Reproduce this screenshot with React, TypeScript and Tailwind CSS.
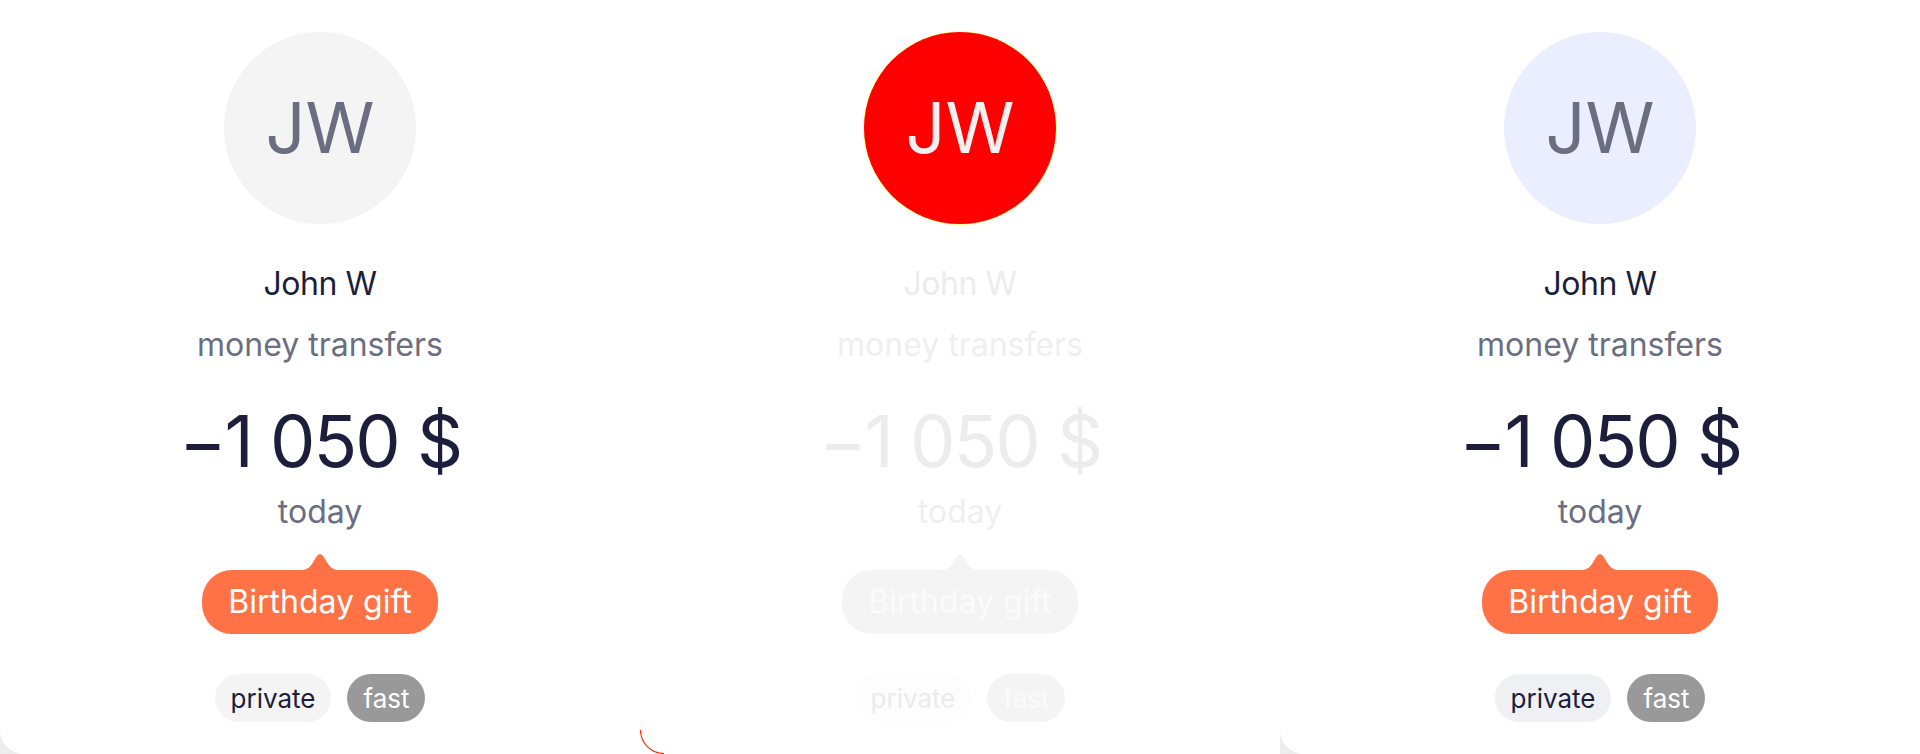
import React from "react";

type Variant = "gray" | "faded" | "blue";

function Tail({ color }: { color: string }) {
  return (
    <svg
      className="absolute left-1/2 -translate-x-1/2 top-[-18px]"
      width="66"
      height="20"
      viewBox="0 0 66 20"
    >
      <path
        d="M0 20 C 15 19, 21 18, 25 12 L 29.5 4.5 Q 33 -0.5 36.5 4.5 L 41 12 C 45 18, 51 19, 66 20 Z"
        fill={color}
      />
    </svg>
  );
}

function Card({ variant }: { variant: Variant }) {
  const faded = variant === "faded";
  const avatarCls =
    variant === "gray"
      ? "bg-[#f4f4f4] text-[#6b6d80]"
      : variant === "blue"
      ? "bg-[#ebeefe] text-[#6b6d80]"
      : "bg-[#ff0000] text-[#f0f0f0] shadow-[0_0_0_1px_rgba(255,255,0,0.35)]";
  const dark = faded ? "text-[#ececec]" : "text-[#1c1e3b]";
  const muted = faded ? "text-[#efefef]" : "text-[#6b6d80]";
  const bubbleBg = faded ? "#f4f4f4" : "#ff7246";
  const privateBg = variant === "gray" ? "bg-[#f4f4f4]" : variant === "blue" ? "bg-[#eff0f3]" : "bg-[#fdfdfd]";
  const privateText = faded ? "text-[#ebebeb]" : "text-[#1c1e3b]";
  const fastBg = faded ? "bg-[#f4f4f4]" : "bg-[#999999]";
  const fastText = faded ? "text-[#fbfbfb]" : "text-white";

  return (
    <div className="relative w-[640px] h-[754px] bg-white rounded-bl-[24px] flex flex-col items-center pt-[32px]">
      <div
        className={`w-[192px] h-[192px] rounded-full flex items-center justify-center text-[70px] leading-none ${avatarCls}`}
      >
        JW
      </div>
      <div className={`mt-[40px] text-[32px] leading-[40px] tracking-[-0.5px] ${dark}`}>John W</div>
      <div className={`mt-[21px] text-[32px] leading-[40px] ${muted}`}>money transfers</div>
      <div className={`mt-[36px] text-[72px] leading-[80px] tracking-[-2px] ${dark}`}>
        −1 050 $
      </div>
      <div className={`mt-[11px] text-[32px] leading-[40px] ${muted}`}>today</div>
      <div
        className={`relative mt-[38px] h-[64px] rounded-[30px] px-[26px] flex items-center text-[32px] leading-[40px] ${
          faded ? "text-[#fbfbfb]" : "text-white"
        }`}
        style={{ backgroundColor: bubbleBg }}
      >
        <Tail color={bubbleBg} />
        Birthday gift
      </div>
      <div className="mt-[40px] flex gap-[16px]">
        <div className={`h-[48px] rounded-full px-[16px] flex items-center text-[26px] ${privateBg} ${privateText}`}>
          private
        </div>
        <div className={`h-[48px] rounded-full px-[16px] flex items-center text-[26px] ${fastBg} ${fastText}`}>
          fast
        </div>
      </div>
      {faded && (
        <svg className="absolute left-0 bottom-0" width="24" height="24" viewBox="0 0 24 24">
          <path d="M0.5 0 A 23.5 23.5 0 0 0 24 23.5" fill="none" stroke="#ff2a00" strokeWidth="1.2" />
        </svg>
      )}
    </div>
  );
}

export default function App() {
  return (
    <div
      className="flex w-[1920px] h-[754px] overflow-hidden bg-white"
      style={{ fontFamily: "Inter, 'Noto Sans', sans-serif" }}
    >
      <div className="bg-[#ededed]">
        <Card variant="gray" />
      </div>
      <div className="bg-white">
        <Card variant="faded" />
      </div>
      <div className="bg-[#ededed]">
        <Card variant="blue" />
      </div>
    </div>
  );
}
